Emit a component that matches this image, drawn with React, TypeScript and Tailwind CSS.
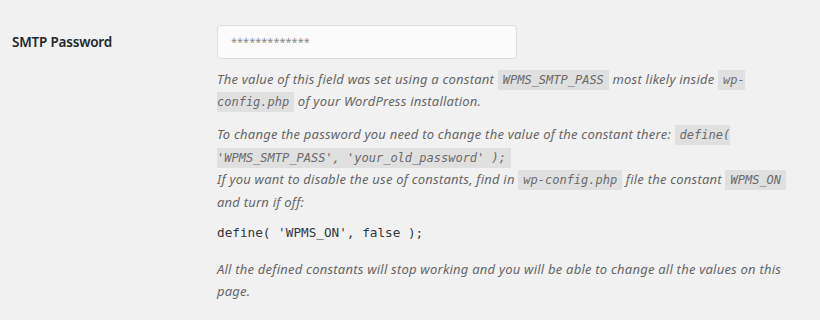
import React from "react";

function C({ children }: { children: React.ReactNode }) {
  return (
    <code className="bg-[rgba(0,0,0,0.07)] px-[5px] pt-[3px] pb-[3px] font-['DejaVu_Sans_Mono',monospace] text-[12px] tracking-normal italic text-[#6a6a6a]">
      {children}
    </code>
  );
}

export default function App() {
  return (
    <div className="w-[820px] h-[320px] overflow-hidden bg-[#f1f1f1] font-['Noto_Sans',sans-serif] text-[#444]">
      <div className="flex pl-3">
        <div className="w-[205px] shrink-0 pt-[32px] text-[13.5px] tracking-[-0.2px] leading-[20px] font-semibold text-[#23282d]">
          SMTP Password
        </div>
        <div className="flex-1 pr-[10px] pt-[25px]">
          <div className="w-[300px] h-[34px] rounded-[4px] border border-[#dddddd] bg-[#fbfbfb] pl-[13px] flex items-center text-[11px] text-[#8a8a8a]">
            *************
          </div>
          <div className="italic text-[13px] tracking-[0.22px] text-[#666] mt-[10px]">
            <p className="leading-[21px]">
              The value of this field was set using a constant <C>WPMS_SMTP_PASS</C> most likely inside{" "}
              <C>wp-config.php</C> of your WordPress installation.
            </p>
            <p className="leading-[21.5px] mt-[11px]">
              To change the password you need to change the value of the constant there:{" "}
              <C>define( 'WPMS_SMTP_PASS', 'your_old_password' );</C>
              <br />
              If you want to disable the use of constants, find in <C>wp-config.php</C> file the constant{" "}
              <C>WPMS_ON</C> and turn if off:
            </p>
            <p className="not-italic tracking-normal mt-[9px] leading-[21px] font-['DejaVu_Sans_Mono',monospace] text-[12.7px] text-[#32373c]">
              define( 'WPMS_ON', false );
            </p>
            <p className="leading-[22px] mt-[15px]">
              All the defined constants will stop working and you will be able to change all the values on this
              page.
            </p>
          </div>
        </div>
      </div>
    </div>
  );
}
